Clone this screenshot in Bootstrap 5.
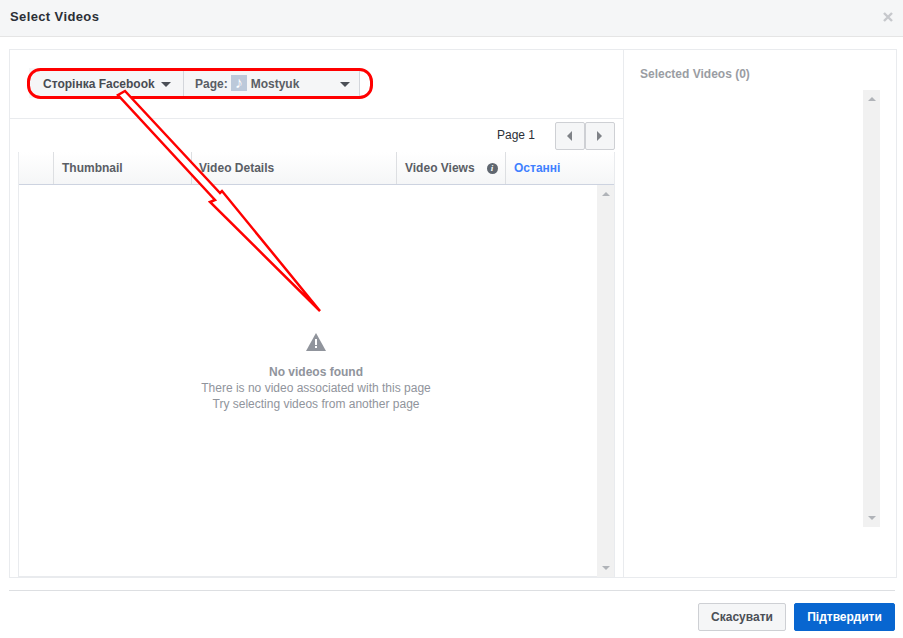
<!DOCTYPE html>
<html>
<head>
    <title>Select Videos</title>
    <link href="https://cdn.jsdelivr.net/npm/bootstrap@5.3.0/dist/css/bootstrap.min.css" rel="stylesheet">
    <style>
        html, body { height: 638px; overflow: hidden; }
        body { font-family: "Liberation Sans", Arial, sans-serif; font-size: 12px; color: #4b4f56; background: #fff; position: relative; }
        .dlg-head { height: 37px; background: #f5f6f7; border-bottom: 1px solid #e5e5e5; padding: 0 10px 3px; }
        .dlg-title { font-size: 13px; font-weight: 700; color: #2b2f36; letter-spacing: .38px; }
        .panel-outer { margin: 12px 6px 0 9px; height: 529px; border: 1px solid #e9ebee; }
        .left-side { width: 613px; }
        .toolbar { height: 69px; padding: 18px 0 0 19px; border-bottom: 1px solid #e9ebee; }
        .pick-group { width: 331px; height: 30px; background: #f5f6f7; }
        .pick-btn { border-right: 1px solid #d3d6db; font-weight: 700; font-size: 12px; color: #5a5e65; height: 100%; padding: 2px 12px 0 14px; }
        .pick-one { width: 155px; color: #484c53; }
        .pick-two { width: 176px; padding-left: 11px; padding-right: 9px; }
        .tri-down { border-left: 5px solid transparent; border-right: 5px solid transparent; border-top: 5px solid #4b4f56; }
        .tri-up-sm { border-left: 4px solid transparent; border-right: 4px solid transparent; border-bottom: 4px solid #b0b3b8; }
        .tri-down-sm { border-left: 4px solid transparent; border-right: 4px solid transparent; border-top: 4px solid #b0b3b8; }
        .page-thumb { width: 16px; height: 16px; background: #bcc9da; color: #fff; font-size: 16px; line-height: 16px; margin: -2px 4px 0 3px; }
        .pager-row { height: 33px; padding-right: 8px; }
        .pager-label { color: #2b2f36; margin-right: 20px; margin-top: -2px; }
        .pager-btn { width: 30px; height: 28px; background: #f5f6f7; border: 1px solid #ced0d4; border-radius: 2px; padding-right: 2px; }
        .tri-left { border-top: 5px solid transparent; border-bottom: 5px solid transparent; border-right: 5px solid #7f8287; }
        .tri-right { border-top: 5px solid transparent; border-bottom: 5px solid transparent; border-left: 5px solid #7f8287; }
        .grid-box { margin-left: 8px; width: 597px; height: 425px; border: 1px solid #e9ebee; border-top-color: #e5e7ea; }
        .grid-head { height: 33px; background: linear-gradient(#fff, #f5f6f7); border-bottom: 1px solid #cdd3e0; font-weight: 700; font-size: 12px; color: #5a5e65; margin-top: -1px; }
        .gh-cell { border-right: 1px solid #dddfe2; height: 100%; padding-left: 8px; }
        .gh-check { width: 35px; }
        .gh-thumb { width: 138px; }
        .gh-details { width: 205px; padding-left: 7px; }
        .gh-views { width: 109px; }
        .gh-last { color: #4080ff; border-right: 0; }
        .info-dot { width: 11px; height: 11px; border-radius: 50%; background: #606770; color: #fff; font: italic 700 9px/11px "Liberation Serif", serif; margin-left: 12px; }
        .grid-main { height: 392px; }
        .scroll-col { width: 17px; background: #f1f1f1; padding: 7px 0; }
        .empty-msg { color: #90949c; line-height: 16px; padding: 148px 0 0 16px; }
        .empty-msg b { font-size: 12px; }
        .empty-msg svg { margin-bottom: 13px; }
        .right-side { border-left: 1px solid #e9ebee; padding: 15px 16px 0 16px; }
        .sel-title { color: #9a9da3; font-weight: 700; }
        .sel-scroll { width: 17px; height: 437px; margin: 7px 0 0 auto; }
        .foot-line { margin: 12px 8px 0 9px; border-top: 1px solid #dddfe2; }
        .dlg-foot { padding: 12px 8px 0 0; }
        .act-btn { height: 28px; font-weight: 700; font-size: 12px; line-height: 26px; padding: 0 12px; border-radius: 2px; }
        .act-cancel { width: 88px; background: #f5f6f7; border: 1px solid #ced0d4; color: #4b4f56; }
        .act-ok { width: 101px; background: #0866d0; border: 1px solid #0866d0; color: #fff; }
        .mark-layer { position: absolute; left: 0; top: 0; pointer-events: none; }
    </style>
</head>
<body>
    <div class="dlg-head d-flex align-items-center justify-content-between">
        <div class="dlg-title">Select Videos</div>
        <svg width="10" height="10" viewBox="0 0 10 10"><path d="M1 1 L9 9 M9 1 L1 9" stroke="#c6c8cc" stroke-width="2.4" fill="none"/></svg>
    </div>

    <div class="panel-outer d-flex">
        <div class="left-side flex-shrink-0">
            <div class="toolbar">
                <div class="pick-group d-flex">
                    <div class="pick-btn pick-one d-flex align-items-center justify-content-between">
                        <span>Сторінка Facebook</span><span class="tri-down"></span>
                    </div>
                    <div class="pick-btn pick-two d-flex align-items-center">
                        <span>Page:</span>
                        <span class="page-thumb text-center">♪</span>
                        <span>Mostyuk</span>
                        <span class="tri-down ms-auto"></span>
                    </div>
                </div>
            </div>

            <div class="pager-row d-flex align-items-center justify-content-end">
                <span class="pager-label">Page 1</span>
                <div class="pager-btn d-flex align-items-center justify-content-center"><span class="tri-left"></span></div>
                <div class="pager-btn d-flex align-items-center justify-content-center"><span class="tri-right"></span></div>
            </div>

            <div class="grid-box">
                <div class="grid-head d-flex">
                    <div class="gh-cell gh-check"></div>
                    <div class="gh-cell gh-thumb d-flex align-items-center">Thumbnail</div>
                    <div class="gh-cell gh-details d-flex align-items-center">Video Details</div>
                    <div class="gh-cell gh-views d-flex align-items-center">Video Views<span class="info-dot text-center">i</span></div>
                    <div class="gh-cell gh-last d-flex align-items-center">Останні</div>
                </div>
                <div class="grid-main d-flex">
                    <div class="empty-msg flex-grow-1 text-center">
                        <svg class="d-block mx-auto" width="20" height="18" viewBox="0 0 20 18">
                            <path d="M10 0 L20 18 H0 Z" fill="#90949c"/>
                            <rect x="9" y="6" width="2" height="6" fill="#fff"/>
                            <rect x="9" y="13" width="2" height="2" fill="#fff"/>
                        </svg>
                        <b>No videos found</b><br>
                        There is no video associated with this page<br>
                        Try selecting videos from another page
                    </div>
                    <div class="scroll-col d-flex flex-column justify-content-between align-items-center">
                        <span class="tri-up-sm"></span><span class="tri-down-sm"></span>
                    </div>
                </div>
            </div>
        </div>

        <div class="right-side flex-grow-1">
            <div class="sel-title">Selected Videos (0)</div>
            <div class="sel-scroll scroll-col d-flex flex-column justify-content-between align-items-center">
                <span class="tri-up-sm"></span><span class="tri-down-sm"></span>
            </div>
        </div>
    </div>

    <div class="foot-line"></div>
    <div class="dlg-foot d-flex justify-content-end gap-2">
        <div class="act-btn act-cancel text-center">Скасувати</div>
        <div class="act-btn act-ok text-center">Підтвердити</div>
    </div>

    <svg class="mark-layer" width="903" height="638" viewBox="0 0 903 638">
        <rect x="28.5" y="69.5" width="343" height="28" rx="12" fill="none" stroke="#f00" stroke-width="3"/>
        <polygon points="125,91 118,95 215,200 210,202 320,311 222,191 220,193" fill="#fff" stroke="#f00" stroke-width="2.5"/>
    </svg>
</body>
</html>
